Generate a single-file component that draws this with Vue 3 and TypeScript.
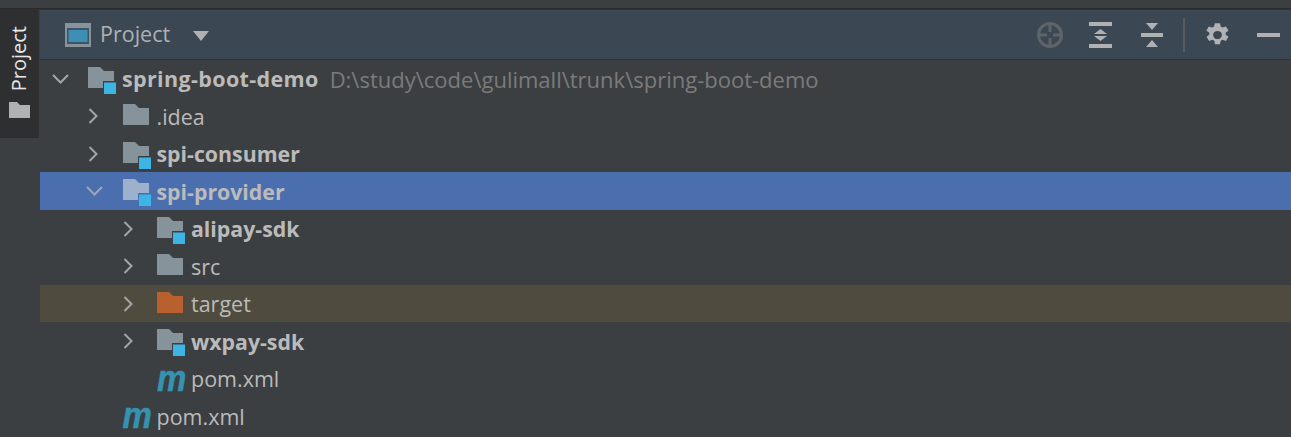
<script setup lang="ts">
interface TreeRow {
  name: string
  depth: number
  kind: 'module' | 'folder' | 'excluded' | 'maven'
  arrow?: 'open' | 'closed'
  bold?: boolean
  hint?: string
  selected?: boolean
  ignored?: boolean
}

const rows: TreeRow[] = [
  { name: 'spring-boot-demo', depth: 0, kind: 'module', arrow: 'open', bold: true, hint: 'D:\\study\\code\\gulimall\\trunk\\spring-boot-demo' },
  { name: '.idea', depth: 1, kind: 'folder', arrow: 'closed' },
  { name: 'spi-consumer', depth: 1, kind: 'module', arrow: 'closed', bold: true },
  { name: 'spi-provider', depth: 1, kind: 'module', arrow: 'open', bold: true, selected: true },
  { name: 'alipay-sdk', depth: 2, kind: 'module', arrow: 'closed', bold: true },
  { name: 'src', depth: 2, kind: 'folder', arrow: 'closed' },
  { name: 'target', depth: 2, kind: 'excluded', arrow: 'closed', ignored: true },
  { name: 'wxpay-sdk', depth: 2, kind: 'module', arrow: 'closed', bold: true },
  { name: 'pom.xml', depth: 2, kind: 'maven' },
  { name: 'pom.xml', depth: 1, kind: 'maven' },
]
</script>

<template>
  <div class="ide">
    <aside class="stripe">
      <div class="stripe-tab">
        <span class="stripe-label">Project</span>
        <svg class="stripe-folder" width="21" height="16" viewBox="0 0 21 16">
          <path d="M0 0h8l3 3h10v13H0z" fill="#afb1b3" />
        </svg>
      </div>
    </aside>

    <main class="panel">
      <header class="toolbar">
        <svg class="view-icon" width="26" height="24" viewBox="0 0 26 24">
          <rect width="26" height="24" fill="#87939a" />
          <rect x="2" y="5" width="22" height="16" fill="#3e5366" />
          <rect x="3.500" y="7" width="19" height="12" fill="#3d8fb5" />
        </svg>
        <span class="view-name">Project</span>
        <svg class="view-caret" width="16" height="10" viewBox="0 0 16 10">
          <path d="M0 0h16L8 10z" fill="#afb1b3" />
        </svg>

        <div class="actions">
          <svg width="26" height="26" viewBox="0 0 26 26" fill="none" stroke="#5f6468" stroke-width="3">
            <circle cx="13" cy="13" r="11.500" />
            <path d="M13 2v8M13 16v8M2 13h8M16 13h8" />
          </svg>
          <svg class="expand" width="23" height="26" viewBox="0 0 23 26" fill="#afb1b3">
            <path d="M0 0h23v4H0zM0 22h23v4H0zM11.500 7l6.500 5H5zM11.500 19L5 14h13z" />
          </svg>
          <svg class="collapse" width="22" height="24" viewBox="0 0 22 24" fill="#afb1b3">
            <path d="M0 10h22v4H0zM5 0h12l-6 7zM11 17l6 7H5z" />
          </svg>
          <span class="divider"></span>
          <svg class="gear" width="23" height="24" viewBox="1.500 0.300 21 23.400" preserveAspectRatio="none" fill="#afb1b3">
            <path fill-rule="evenodd" d="M14.300 0.500l0.600 3.200 1.700 1 3.100-1.100 2.300 4-2.500 2.100v2l2.500 2.100-2.300 4-3.100-1.100-1.700 1-0.600 3.200h-4.600l-0.600-3.200-1.700-1-3.100 1.100-2.300-4 2.500-2.100v-2L1.800 7.600l2.300-4 3.100 1.100 1.700-1 0.600-3.200zM12 8a4 4 0 1 0 0 8 4 4 0 0 0 0-8z" />
          </svg>
          <span class="minimize"></span>
        </div>
      </header>

      <ul class="tree">
        <li
          v-for="(row, i) in rows"
          :key="i"
          class="row"
          :class="{ selected: row.selected, ignored: row.ignored }"
          :style="{ paddingLeft: `${row.depth * 34.5}px` }"
        >
          <span class="arrow">
            <svg v-if="row.arrow === 'open'" class="arrow-open" width="17" height="10" viewBox="0 0 17 10" fill="none" stroke="#a3a5a7" stroke-width="2">
              <path d="M1 1l7.500 7.500L16 1" />
            </svg>
            <svg v-else-if="row.arrow === 'closed'" width="10" height="16" viewBox="0 0 10 16" fill="none" stroke="#a3a5a7" stroke-width="2">
              <path d="M1.500 1l7 7-7 7" />
            </svg>
          </span>

          <span class="icon">
            <span v-if="row.kind === 'maven'" class="maven">m</span>
            <svg v-else class="folder" width="29" height="27" viewBox="0 0 29 27">
              <path
                d="M0 0h12l4 4h10v17H0z"
                :fill="row.kind === 'excluded' ? '#b8602e' : row.selected ? '#9db0cc' : '#87939a'"
              />
              <rect v-if="row.kind === 'module'" x="15" y="14" width="13" height="13" :fill="row.selected ? '#4b6eaf' : '#3c3f41'" />
              <rect v-if="row.kind === 'module'" x="16" y="15.500" width="12" height="11.500" fill="#3cb4e4" />
            </svg>
          </span>

          <span class="name" :class="{ bold: row.bold, root: row.depth === 0 }">{{ row.name }}</span>
          <span v-if="row.hint" class="hint">{{ row.hint }}</span>
        </li>
      </ul>
    </main>
  </div>
</template>

<style>
html,
body {
  margin: 0;
  background: #3c3f41;
  overflow: hidden;
}
</style>

<style scoped>
.ide {
  display: flex;
  width: 1291px;
  height: 437px;
  padding-top: 8px;
  box-sizing: border-box;
  overflow: hidden;
  background: #3c3f41;
  font-family: "Open Sans", "Noto Sans", sans-serif;
  color: #bbbbbb;
}
.stripe {
  width: 40px;
  flex: none;
  border-top: 1px solid #2b2b2b;
  box-sizing: border-box;
}
.stripe-tab {
  width: 39px;
  height: 129px;
  display: flex;
  flex-direction: column;
  align-items: center;
  padding-top: 17px;
  box-sizing: border-box;
  background: #2d2f30;
  border-right: 1px solid #323232;
}
.stripe-label {
  writing-mode: vertical-rl;
  transform: rotate(180deg);
  font-size: 20px;
  line-height: 22px;
  color: #e8e8e8;
}
.stripe-folder {
  margin-top: 11px;
}
.panel {
  flex: 1;
  min-width: 0;
  border-top: 1px solid #2b2b2b;
}
.toolbar {
  height: 51px;
  display: flex;
  align-items: center;
  padding-left: 25px;
  box-sizing: border-box;
  background: #3c4754;
  border-top: 1px solid #333;
  border-bottom: 1px solid #323232;
}
.view-name {
  margin: -2px 0 0 9px;
  font-size: 21.5px;
  color: #afb1b3;
}
.view-caret {
  margin: 2px 0 0 23px;
}
.actions {
  margin-left: auto;
  display: flex;
  align-items: center;
  padding-right: 11px;
}
.expand {
  margin-left: 26px;
}
.collapse {
  margin-left: 29px;
}
.divider {
  width: 2px;
  height: 34px;
  margin-left: 20px;
  background: #555b60;
}
.gear {
  margin-left: 21px;
}
.minimize {
  width: 23px;
  height: 4px;
  margin-left: 28px;
  background: #afb1b3;
}
.tree {
  list-style: none;
  margin: -0.1px 0 0;
  padding: 0;
}
.row {
  height: 37.5px;
  display: flex;
  align-items: center;
  font-size: 21.5px;
  white-space: nowrap;
}
.row.selected {
  background: #4b6eaf;
}
.row.ignored {
  background: #4f4b3e;
}
.arrow {
  width: 48px;
  flex: none;
  display: flex;
  justify-content: center;
  padding-right: 11px;
  box-sizing: border-box;
}
.arrow-open {
  margin-left: 3px;
}
.icon {
  width: 34px;
  flex: none;
  display: flex;
  align-items: center;
}
.folder {
  margin-top: 3px;
}
.maven {
  font-family: "Liberation Sans", sans-serif;
  font-weight: 700;
  font-style: italic;
  font-size: 33px;
  line-height: 30px;
  color: #3592b0;
  -webkit-text-stroke: 0.5px #3592b0;
  transform: scaleY(1.12);
}
.bold {
  font-weight: 700;
  font-size: 21.3px;
}
.root {
  font-size: 21.5px;
  letter-spacing: 0.35px;
}
.hint {
  margin-left: 11px;
  font-size: 22px;
  color: #7b7b7b;
}
</style>
